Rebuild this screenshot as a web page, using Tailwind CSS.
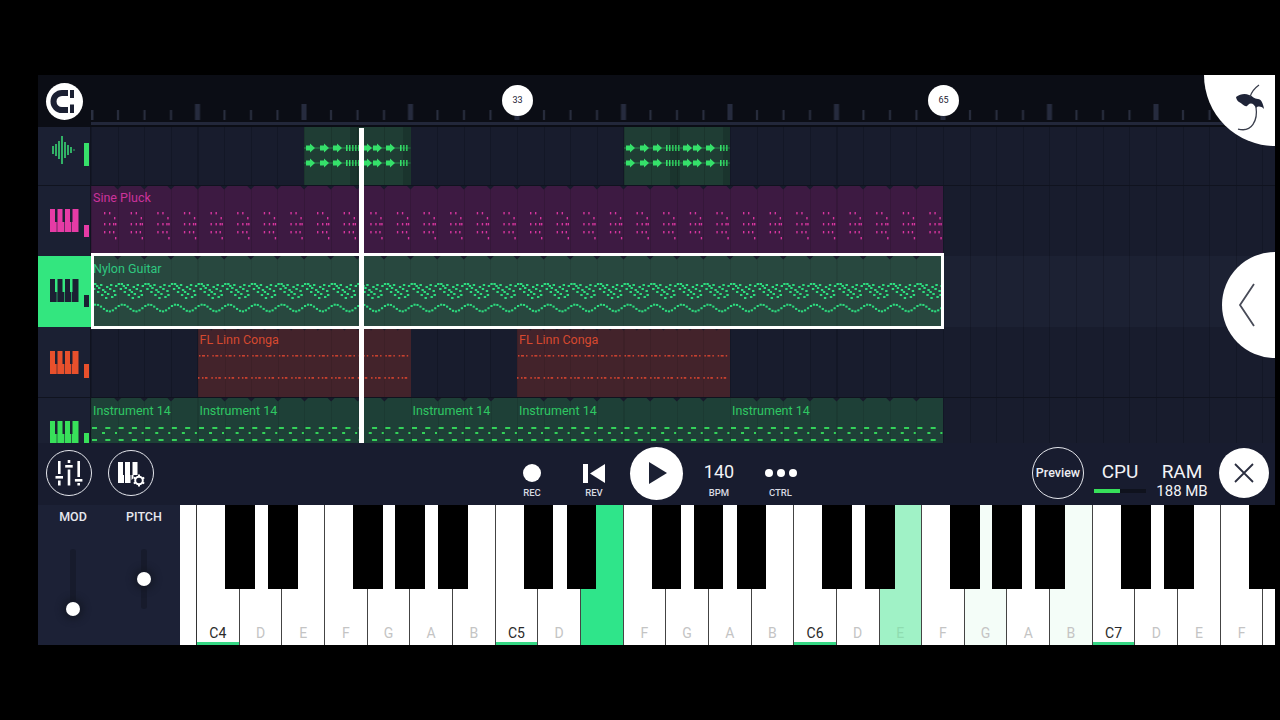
<!DOCTYPE html>
<html lang="en">
  <head>
    <meta charset="UTF-8" />
    <title>FL Studio Mobile</title>
    <script src="https://cdn.jsdelivr.net/npm/@tailwindcss/browser@4"></script>
  </head>
  <body class="bg-black w-[1280px] h-[720px] overflow-hidden pt-[75px] pl-[38px] font-[family-name:Roboto,sans-serif] text-white">
    <div class="relative w-[1237px] h-[570px] overflow-hidden flex flex-col bg-[#181c2d]">

      <!-- RULER -->
      <header class="relative h-[52px] flex bg-[#0b0d15]">
        <div class="w-[53px] shrink-0 pl-[8px] pt-[8px]">
          <div class="w-[37px] h-[37px] rounded-full bg-white flex items-center justify-center">
            <svg width="37" height="37" viewBox="0 0 37 37">
              <path d="M22 10h-6a8.500 8.500 0 0 0 0 17h6" fill="none" stroke="#1b2033" stroke-width="6" />
              <rect x="24" y="7" width="4" height="8" fill="#1b2033" />
              <rect x="24" y="21.500" width="4" height="8.500" fill="#1b2033" />
            </svg>
          </div>
        </div>
        <div class="relative flex-1 border-b-[3px] border-[#22273a] mb-[2px]">
          <svg class="absolute left-0 top-[29px]" width="1184" height="16">
            <defs>
              <pattern id="ticks" width="106.5" height="16" patternUnits="userSpaceOnUse">
                <rect x="-2.5" y="0" width="5" height="16" fill="#262b3e" />
                <rect x="104" y="0" width="5" height="16" fill="#262b3e" />
                <rect x="26" y="6" width="2" height="10" fill="#2a2f40" />
                <rect x="52.5" y="6" width="2" height="10" fill="#2a2f40" />
                <rect x="79" y="6" width="2" height="10" fill="#2a2f40" />
              </pattern>
            </defs>
            <rect width="1184" height="16" fill="url(#ticks)" />
            <rect x="0" y="0" width="3" height="6" fill="#0b0d15" />
            <rect x="0" y="6" width="2" height="10" fill="#2a2f40" />
          </svg>
          <div class="absolute left-[411px] top-[10px] w-[31px] h-[31px] rounded-full bg-white text-[#1b2033] text-[9px] flex items-center justify-center">33</div>
          <div class="absolute left-[837px] top-[10px] w-[31px] h-[31px] rounded-full bg-white text-[#1b2033] text-[9px] flex items-center justify-center">65</div>
        </div>
      </header>

      <!-- TRACKS -->
      <section class="flex flex-col">
        <div class="flex h-[58px]">
          <div class="w-[53px] shrink-0 relative bg-[#1b2033] border-r border-[#10131f]">
            <svg class="absolute left-[13px] top-[9px]" width="26" height="28" viewBox="0 0 26 28" stroke="#3be078" stroke-width="1.500">
              <path d="M2 10v8M5 8v12M8 5v18M11 0v28M14 6v16M17 9v10M20 11v6M23 13.500v1" fill="none" />
            </svg>
            <div class="absolute left-[46px] top-[16px] w-[5px] h-[23px] bg-[#37e06a]"></div>
          </div>
          <div class="flex-1 grid grid-cols-[repeat(44,26.625px)] bg-[repeating-linear-gradient(90deg,#131726_0,#131726_1px,transparent_1px,transparent_26.625px)]">
            <div class="clip col-start-9 col-span-4 relative bg-[#1f3d34] bg-[repeating-linear-gradient(90deg,#00000022_0,#00000022_1px,transparent_1px,transparent_26.625px)]" data-pattern="audio" data-color="#35e06a" data-bars="4" data-h="58"></div>
            <div class="clip col-start-21 col-span-4 relative bg-[#1f3d34] bg-[repeating-linear-gradient(90deg,#00000022_0,#00000022_1px,transparent_1px,transparent_26.625px)]" data-pattern="audio" data-color="#35e06a" data-bars="4" data-h="58"></div>
          </div>
        </div>

        <div class="flex h-[71px] border-t border-[#10131f]">
          <div class="w-[53px] shrink-0 relative bg-[#1b2033] border-r border-[#10131f]">
            <svg class="absolute left-[12px] top-[23px]" width="29" height="23" viewBox="0 0 29 23" fill="#e63ba5"><use href="#piano" /></svg>
            <div class="absolute left-[46px] top-[39px] w-[5px] h-[12px] bg-[#e63ba5]"></div>
          </div>
          <div class="flex-1 grid grid-cols-[repeat(44,26.625px)] bg-[repeating-linear-gradient(90deg,#131726_0,#131726_1px,transparent_1px,transparent_26.625px)]">
            <div class="clip col-start-1 col-span-32 relative bg-[#3d1a42] bg-[repeating-linear-gradient(90deg,#00000022_0,#00000022_1px,transparent_1px,transparent_26.625px)]" data-pattern="sine" data-color="#d8369f" data-bars="32" data-h="70">
              <span class="absolute left-[2px] top-[5px] text-[12.5px] leading-[14px] text-[#cc339b]">Sine Pluck</span>
            </div>
          </div>
        </div>

        <div class="relative z-10 flex h-[71px]">
          <div class="w-[53px] shrink-0 relative bg-[#33e67f]">
            <svg class="absolute left-[12px] top-[23px]" width="29" height="23" viewBox="0 0 29 23" fill="#1b2033"><use href="#piano" /></svg>
            <div class="absolute left-[46px] top-[39px] w-[5px] h-[12px] bg-[#1b2033]"></div>
          </div>
          <div class="flex-1 grid grid-cols-[repeat(44,26.625px)] bg-[#1c2133] bg-[repeating-linear-gradient(90deg,#171b2b_0,#171b2b_1px,transparent_1px,transparent_26.625px)]">
            <div class="clip col-start-1 col-span-32 relative bg-[#28483f] bg-[repeating-linear-gradient(90deg,#00000014_0,#00000014_1px,transparent_1px,transparent_26.625px)]" data-pattern="guitar" data-color="#2ddc7f" data-bars="32" data-h="71">
              <span class="absolute left-[2px] top-[6px] text-[12.5px] leading-[14px] text-[#2fc77f]">Nylon Guitar</span>
              <div class="absolute left-0 right-[-1px] top-[-3px] bottom-[-2px] border-[3px] border-white"></div>
            </div>
          </div>
        </div>

        <div class="flex h-[71px] border-b border-[#10131f]">
          <div class="w-[53px] shrink-0 relative bg-[#1b2033] border-r border-[#10131f]">
            <svg class="absolute left-[12px] top-[24px]" width="29" height="23" viewBox="0 0 29 23" fill="#e8502c"><use href="#piano" /></svg>
            <div class="absolute left-[46px] top-[37px] w-[5px] h-[14px] bg-[#e8502c]"></div>
          </div>
          <div class="flex-1 grid grid-cols-[repeat(44,26.625px)] bg-[repeating-linear-gradient(90deg,#131726_0,#131726_1px,transparent_1px,transparent_26.625px)]">
            <div class="clip col-start-5 col-span-8 relative bg-[#43232b] bg-[repeating-linear-gradient(90deg,#00000018_0,#00000018_1px,transparent_1px,transparent_26.625px)]" data-pattern="conga" data-color="#c9412f" data-bars="8" data-h="70">
              <span class="absolute left-[2px] top-[6px] text-[12.5px] leading-[14px] text-[#d6492f]">FL Linn Conga</span>
            </div>
            <div class="clip col-start-17 col-span-8 relative bg-[#43232b] bg-[repeating-linear-gradient(90deg,#00000018_0,#00000018_1px,transparent_1px,transparent_26.625px)]" data-pattern="conga" data-color="#c9412f" data-bars="8" data-h="70">
              <span class="absolute left-[2px] top-[6px] text-[12.5px] leading-[14px] text-[#d6492f]">FL Linn Conga</span>
            </div>
          </div>
        </div>

        <div class="flex h-[45px] overflow-hidden">
          <div class="w-[53px] shrink-0 relative bg-[#1b2033] border-r border-[#10131f]">
            <svg class="absolute left-[12px] top-[23px]" width="29" height="23" viewBox="0 0 29 23" fill="#38e05a"><use href="#piano" /></svg>
            <div class="absolute left-[46px] top-[35px] w-[5px] h-[10px] bg-[#38e05a]"></div>
          </div>
          <div class="flex-1 grid grid-cols-[repeat(44,26.625px)] bg-[repeating-linear-gradient(90deg,#131726_0,#131726_1px,transparent_1px,transparent_26.625px)]">
            <div class="clip col-start-1 col-span-4 relative bg-[#1e4037] bg-[repeating-linear-gradient(90deg,#00000018_0,#00000018_1px,transparent_1px,transparent_26.625px)]" data-pattern="inst" data-color="#34d25a" data-bars="4" data-h="45">
              <span class="absolute left-[2px] top-[6px] text-[12.5px] leading-[14px] text-[#2fc763]">Instrument 14</span>
            </div>
            <div class="clip col-start-5 col-span-8 relative bg-[#1e4037] bg-[repeating-linear-gradient(90deg,#00000018_0,#00000018_1px,transparent_1px,transparent_26.625px)]" data-pattern="inst" data-color="#34d25a" data-bars="8" data-h="45">
              <span class="absolute left-[2px] top-[6px] text-[12.5px] leading-[14px] text-[#2fc763]">Instrument 14</span>
            </div>
            <div class="clip col-start-13 col-span-4 relative bg-[#1e4037] bg-[repeating-linear-gradient(90deg,#00000018_0,#00000018_1px,transparent_1px,transparent_26.625px)]" data-pattern="inst" data-color="#34d25a" data-bars="4" data-h="45">
              <span class="absolute left-[2px] top-[6px] text-[12.5px] leading-[14px] text-[#2fc763]">Instrument 14</span>
            </div>
            <div class="clip col-start-17 col-span-8 relative bg-[#1e4037] bg-[repeating-linear-gradient(90deg,#00000018_0,#00000018_1px,transparent_1px,transparent_26.625px)]" data-pattern="inst" data-color="#34d25a" data-bars="8" data-h="45">
              <span class="absolute left-[2px] top-[6px] text-[12.5px] leading-[14px] text-[#2fc763]">Instrument 14</span>
            </div>
            <div class="clip col-start-25 col-span-8 relative bg-[#1e4037] bg-[repeating-linear-gradient(90deg,#00000018_0,#00000018_1px,transparent_1px,transparent_26.625px)]" data-pattern="inst" data-color="#34d25a" data-bars="8" data-h="45">
              <span class="absolute left-[2px] top-[6px] text-[12.5px] leading-[14px] text-[#2fc763]">Instrument 14</span>
            </div>
          </div>
        </div>
      </section>

      <!-- TRANSPORT -->
      <section class="h-[62px] flex bg-[#181c2f]">
        <div class="flex items-center gap-[16px] pl-[8px] w-[463px] shrink-0 pb-[2px]">
          <div class="w-[46px] h-[46px] rounded-full border-[1.5px] border-[#e4e6ec] flex items-center justify-center">
            <svg width="30" height="28" viewBox="0 0 30 28" fill="#fff">
              <rect x="4" y="2" width="2.600" height="13" /><rect x="1.500" y="17" width="7.500" height="2.600" /><rect x="4" y="21.500" width="2.600" height="5" />
              <rect x="13.700" y="1" width="2.600" height="3" /><rect x="11.200" y="6" width="7.500" height="2.600" /><rect x="13.700" y="10.500" width="2.600" height="16" />
              <rect x="23.400" y="2" width="2.600" height="16" /><rect x="20.900" y="20" width="7.500" height="2.600" /><rect x="23.400" y="24" width="2.600" height="2.500" />
            </svg>
          </div>
          <div class="w-[46px] h-[46px] rounded-full border-[1.5px] border-[#e4e6ec] flex items-center justify-center">
            <svg width="34" height="34" viewBox="0 0 34 34" fill="#fff">
              <rect x="4" y="6" width="5" height="13" /><rect x="11" y="6" width="5" height="13" /><rect x="18.500" y="6" width="5" height="13" />
              <path d="M4 19h6v8H4zM11 19h5.500v8H11zM17.500 19h2v3l-2 2z" />
              <circle cx="25" cy="24.500" r="3.800" fill="none" stroke="#fff" stroke-width="2" />
              <path d="M25 18.500v2.500M25 28v2.500M19.800 21.500l2.200 1.300M28 26.200l2.200 1.300M19.800 27.500l2.200-1.300M28 22.800l2.200-1.300" stroke="#fff" stroke-width="2" fill="none" />
            </svg>
          </div>
        </div>

        <div class="w-[62px] pt-[19px] flex flex-col items-center">
          <div class="h-[22px] flex items-center"><div class="w-[18px] h-[18px] rounded-full bg-white"></div></div>
          <span class="mt-[4px] text-[9.5px] leading-[10px] font-medium text-[#d8dae2]">REC</span>
        </div>
        <div class="w-[62px] pt-[19px] flex flex-col items-center">
          <div class="h-[22px] flex items-center">
            <svg width="22" height="19" viewBox="0 0 22 19" fill="#fff"><rect x="0" y="0" width="5" height="19" /><path d="M22 0v19L7 9.500z" /></svg>
          </div>
          <span class="mt-[4px] text-[9.5px] leading-[10px] font-medium text-[#d8dae2]">REV</span>
        </div>
        <div class="w-[63px] flex items-center justify-center pb-[2px]">
          <div class="w-[53px] h-[53px] rounded-full bg-white flex items-center justify-center">
            <svg width="18" height="22" viewBox="0 0 18 22" class="ml-[2px]"><path d="M0 0l18 11L0 22z" fill="#1b2033" /></svg>
          </div>
        </div>
        <div class="w-[62px] pt-[18px] flex flex-col items-center">
          <div class="h-[22px] flex items-center text-[18px] leading-[22px] text-[#f2f3f6]">140</div>
          <span class="mt-[5px] text-[9.5px] leading-[10px] font-medium text-[#d8dae2]">BPM</span>
        </div>
        <div class="w-[61px] pt-[19px] flex flex-col items-center">
          <div class="h-[22px] flex items-center gap-[4px]">
            <div class="w-[8px] h-[8px] rounded-full bg-white"></div>
            <div class="w-[8px] h-[8px] rounded-full bg-white"></div>
            <div class="w-[8px] h-[8px] rounded-full bg-white"></div>
          </div>
          <span class="mt-[4px] text-[9.5px] leading-[10px] font-medium text-[#d8dae2]">CTRL</span>
        </div>

        <div class="flex ml-auto pr-[6px]">
          <div class="self-center mb-[2px] w-[52px] h-[52px] rounded-full border-[1.5px] border-[#e4e6ec] flex items-center justify-center text-[12.5px] font-medium text-[#eceef2]">Preview</div>
          <div class="w-[52px] ml-[10px] flex flex-col items-center pt-[18px]">
            <span class="text-[19px] leading-[22px] text-[#f2f3f6]">CPU</span>
            <div class="mt-[6px] w-full h-[4px] bg-[#0f121d]"><div class="w-1/2 h-full bg-[#37e05a]"></div></div>
          </div>
          <div class="w-[56px] ml-[8px] flex flex-col items-center pt-[18px]">
            <span class="text-[19px] leading-[22px] text-[#f2f3f6]">RAM</span>
            <span class="text-[15px] leading-[16px] text-[#f2f3f6]">188 MB</span>
          </div>
          <div class="self-center mb-[2px] w-[50px] h-[50px] ml-[9px] rounded-full bg-white flex items-center justify-center">
            <svg width="20" height="20" viewBox="0 0 20 20"><path d="M1 1l18 18M19 1L1 19" stroke="#2a2e40" stroke-width="1.800" /></svg>
          </div>
        </div>
      </section>

      <!-- KEYBOARD -->
      <section class="h-[140px] flex">
        <div class="w-[142px] shrink-0 bg-[#1c2136] flex">
          <div class="w-[70px] flex flex-col items-center pt-[5px]">
            <span class="text-[12.5px] leading-[13px] font-medium text-[#e6e8ee]">MOD</span>
            <div class="relative mt-[26px] w-[6px] h-[60px] bg-[#171b2c] rounded-sm">
              <div class="absolute left-[-4px] bottom-[-7px] w-[14px] h-[14px] rounded-full bg-white shadow-[0_0_6px_4px_#12152299]"></div>
            </div>
          </div>
          <div class="w-[72px] flex flex-col items-center pt-[5px]">
            <span class="text-[12.5px] leading-[13px] font-medium text-[#e6e8ee]">PITCH</span>
            <div class="relative mt-[26px] w-[6px] h-[60px] bg-[#171b2c] rounded-sm">
              <div class="absolute left-[-4px] top-[23px] w-[14px] h-[14px] rounded-full bg-white shadow-[0_0_6px_4px_#12152299]"></div>
            </div>
          </div>
        </div>
        <div id="keys" class="relative flex-1 flex overflow-hidden bg-white"></div>
      </section>

      <!-- OVERLAYS -->
      <div class="absolute left-[321px] top-[53px] w-[5px] h-[315px] bg-white z-20"></div>
      <div class="absolute right-0 top-0 w-[71px] h-[71px] rounded-bl-full bg-white z-20">
        <svg width="71" height="71" viewBox="0 0 71 71">
          <path d="M32 22C36 19 41 18 45 20C49 21 50 24 54 24C57 24 59 28 60 34C57 31 54 31 52 33C50 29 47 27 44 30C42 33 40 30 38 29C36 27 33 27 32 22Z" fill="#1f2438" />
          <path d="M55 10Q48 15 46 22M52 32C54 45 48 58 34 54" fill="none" stroke="#3a3e4c" stroke-width="1.300" />
        </svg>
      </div>
      <div class="absolute right-0 top-[177px] w-[53px] h-[106px] rounded-l-full bg-white z-20 flex items-center">
        <svg width="20" height="44" viewBox="0 0 20 44" class="ml-[16px]"><path d="M16 1L2 22l14 21" fill="none" stroke="#484b58" stroke-width="1.800" /></svg>
      </div>

      <svg width="0" height="0" class="absolute">
        <defs>
          <g id="piano">
            <rect x="0" y="0" width="5" height="13" /><rect x="7.500" y="0" width="5" height="13" /><rect x="15" y="0" width="5" height="13" /><rect x="22.500" y="0" width="6" height="13" />
            <rect x="0" y="13" width="6.700" height="10" /><rect x="7.300" y="13" width="6.700" height="10" /><rect x="14.600" y="13" width="6.700" height="10" /><rect x="21.900" y="13" width="6.600" height="10" />
          </g>
        </defs>
      </svg>
    </div>

    <script>
      const BAR = 26.625;

      // note layouts, one repeat each, in px from the clip's top-left
      const SINE = [[13,26],[18,26],[23,31],[13,37],[18,37],[22,37],[24,37],[13,45],[18,45],[22,45],[24,51]];
      const GUITAR = [[0,27],[3,27],[5,29],[7,31],[9,28],[11,33],[13,35],[15,30],[16,37],[18,32],[20,40],[22,34],[24,29],[2,32],[6,35],[10,38],[14,41],[19,28],[23,38]];

      function add(svg, tag, attrs) {
        const el = document.createElementNS("http://www.w3.org/2000/svg", tag);
        for (const k in attrs) el.setAttribute(k, attrs[k]);
        svg.appendChild(el);
      }

      function drawClip(clip) {
        const w = Number(clip.dataset.bars) * BAR, h = Number(clip.dataset.h), kind = clip.dataset.pattern, c = clip.dataset.color;
        const svg = document.createElementNS("http://www.w3.org/2000/svg", "svg");
        svg.setAttribute("width", w);
        svg.setAttribute("height", h);
        svg.setAttribute("class", "absolute left-0 top-0");
        const rect = (x, y, rw, rh) => add(svg, "rect", { x, y, width: rw, height: rh, fill: c });

        // bar markers along the top edge
        if (kind !== "audio") {
          const step = kind === "conga" ? BAR / 2 : BAR;
          for (let x = step; x < w; x += step) {
            add(svg, "path", { d: `M${x - 3.5} 0h7l-3.500 3.500z`, fill: "#181b2b" });
          }
        }

        for (let x0 = 0; x0 < w - 1; x0 += BAR) {
          if (kind === "sine") SINE.forEach(([x, y]) => rect(x0 + x, y, 1.4, 2.4));
          if (kind === "guitar") {
            GUITAR.forEach(([x, y]) => rect(x0 + x, y, 2.4, 2));
            for (let k = 0; k < 9; k++) {
              const x = k * BAR / 9;
              rect(x0 + x, 51 + 3.4 * Math.cos((k / 9) * 2 * Math.PI + 2.2), 2.2, 2);
            }
          }
          if (kind === "conga") {
            [0, BAR / 2].forEach((o) => {
              rect(x0 + o + 1, 28, 1.5, 1.6); rect(x0 + o + 4, 28, 3, 1.6); rect(x0 + o + 9, 28, 1.5, 1.6);
              rect(x0 + o, 50, 1.5, 1.8); rect(x0 + o + 4, 50, 1.5, 1.8); rect(x0 + o + 7, 50, 2.5, 1.8);
            });
          }
          if (kind === "inst") {
            [0, BAR / 2].forEach((o) => {
              rect(x0 + o + 1, 29, 5, 2); rect(x0 + o + 1, 41, 5, 2);
            });
            rect(x0 + 11, 34, 3, 2); rect(x0 + 24, 34, 2, 2);
          }
        }

        if (kind === "audio") {
          [21, 36].forEach((y) => {
            add(svg, "rect", { x: 0, y: y - 0.4, width: w, height: 0.8, fill: c, opacity: 0.6 });
            [2, 16, 29, 59, 69, 82].forEach((x) => add(svg, "path", { d: `M${x} ${y - 2.5}h4v-2l5 4.500-5 4.500v-2h-4z`, fill: c }));
            [42, 45, 48, 51, 54, 96, 99, 102].forEach((x) => rect(x, y - 3, 1.6, 6));
          });
          add(svg, "rect", { x: 46, y: 0, width: 10, height: h, fill: "#00000022" });
          add(svg, "rect", { x: 99, y: 0, width: 7, height: h, fill: "#00000022" });
        }
        clip.prepend(svg);
      }

      document.querySelectorAll(".clip").forEach(drawClip);

      // ------------- KEYBOARD -------------
      const KEY_W = 42.667;
      const keys = document.getElementById("keys");
      const names = ["C", "D", "E", "F", "G", "A", "B"];
      const tint = { 9: "bg-[#2fe58a]", 16: "bg-[#a0f2c6]", 18: "bg-[#f4fdf8]", 20: "bg-[#f4fdf8]" };

      const first = document.createElement("div");
      first.className = "w-[17px] shrink-0 h-full bg-white border-r-[1.5px] border-[#333]";
      keys.appendChild(first);

      for (let i = 0; i < 26; i++) {
        const n = names[i % 7];
        const isC = i % 7 === 0;
        const key = document.createElement("div");
        key.className = "relative shrink-0 h-full border-r-[1.5px] border-[#444] flex items-end justify-center " + (tint[i] || "bg-white");
        key.style.width = KEY_W + "px";
        // the pressed key hides its label, the key past the edge has none on screen
        if (i !== 9 && i !== 25) {
          const label = document.createElement("span");
          label.className = isC ? "mb-[4px] text-[14px] leading-[16px] text-[#2a2a2a]" : i === 16 ? "mb-[4px] text-[14px] leading-[16px] text-[#8fdcb0]" : "mb-[4px] text-[14px] leading-[16px] text-[#c4c4c4]";
          label.textContent = isC ? "C" + (4 + i / 7) : n;
          key.appendChild(label);
        }
        if (isC) {
          const bar = document.createElement("div");
          bar.className = "absolute left-0 right-0 bottom-0 h-[3px] bg-[#35d884]";
          key.appendChild(bar);
        }
        keys.appendChild(key);
      }

      for (let oct = 0; oct < 4; oct++) {
        [28, 71, 156, 198, 241].forEach((off) => {
          const black = document.createElement("div");
          black.className = "absolute top-0 w-[29.5px] h-[84px] bg-black";
          black.style.left = 17 + oct * KEY_W * 7 + off + "px";
          keys.appendChild(black);
        });
      }
    </script>
  </body>
</html>
